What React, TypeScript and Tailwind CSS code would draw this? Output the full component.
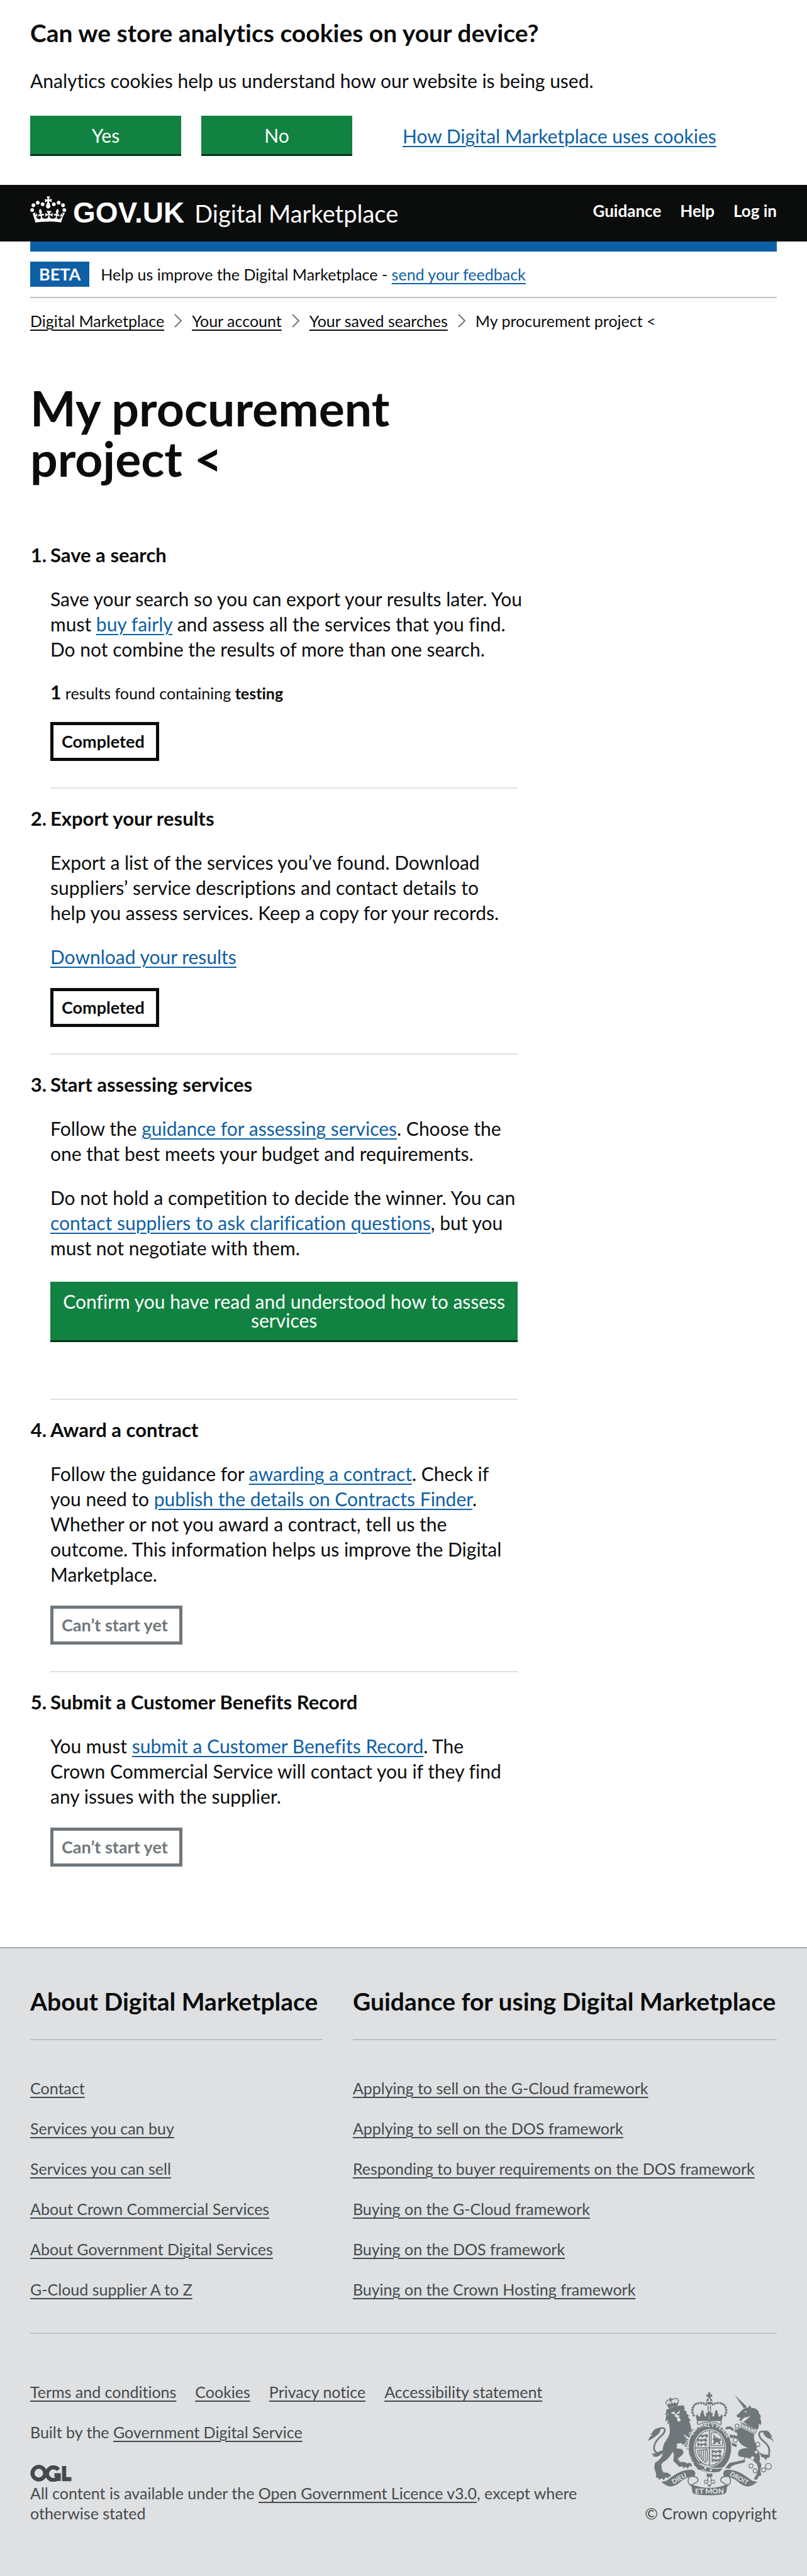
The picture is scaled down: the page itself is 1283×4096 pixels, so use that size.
import type { ReactNode } from "react";

const linkClass =
  "text-[#0e60a5] underline decoration-2 underline-offset-4 hover:text-[#2b8cc4]";
const footerLinkClass = "underline decoration-2 underline-offset-4";

function A({ children }: { children: ReactNode }) {
  return (
    <a href="#" className={linkClass}>
      {children}
    </a>
  );
}

function CrownLogo() {
  return (
    <svg viewBox="0 4 36 26.2" className="h-[42px] w-[58px] shrink-0" fill="currentColor" aria-hidden="true">
      <path d="M6.7 12.2c1 .4 2.1-.1 2.5-1s-.1-2.1-1-2.5c-1-.4-2.1.1-2.5 1-.4 1 0 2.1 1 2.5m-4.3 2.5c1 .4 2.1-.1 2.5-1s-.1-2.1-1-2.5c-1-.4-2.1.1-2.5 1-.5 1 0 2.1 1 2.5m-1.3 4.8c1 .4 2.1-.1 2.5-1 .4-1-.1-2.1-1-2.5-1-.4-2.1.1-2.5 1-.4 1 0 2.1 1 2.5m10.4-5.8c1 .4 2.1-.1 2.5-1s-.1-2.1-1-2.5c-1-.4-2.1.1-2.5 1s0 2.1 1 2.5m17.4-1.5c-1 .4-2.1-.1-2.5-1s.1-2.1 1-2.5c1-.4 2.1.1 2.5 1 .5 1 0 2.1-1 2.5m4.3 2.5c-1 .4-2.1-.1-2.5-1s.1-2.1 1-2.5c1-.4 2.1.1 2.5 1 .5 1 0 2.1-1 2.5m1.3 4.8c-1 .4-2.1-.1-2.5-1-.4-1 .1-2.1 1-2.5 1-.4 2.1.1 2.5 1 .4 1 0 2.1-1 2.5m-10.4-5.8c-1 .4-2.1-.1-2.5-1s.1-2.1 1-2.5c1-.4 2.1.1 2.5 1s0 2.1-1 2.5m-5.3-4.9 2.4 1.3V6.5l-2.4.8c-.1-.1-.1-.2-.2-.2s1-3 1-3h-3.4l1 3c-.1.1-.2.1-.2.2-.1.1-2.4-.7-2.4-.7v3.5L17 8.8c-.1.1 0 .2.1.3l-1.4 4.2c-.1.2-.1.4-.1.7 0 1.1.8 2.1 1.9 2.2h.6C19.2 16 20 15.1 20 14c0-.2 0-.4-.1-.7l-1.4-4.2c.2-.1.3-.2.3-.3m-1 20.3c4.6 0 8.9.3 12.8.9 1.1-4.6 2.4-7.2 3.8-9.1l-2.6-.9c.3 1.3.3 1.9 0 2.8-.4-.4-.8-1.2-1.1-2.4l-1.2 4.2c.8-.5 1.4-.9 2-.9-1.2 2.6-2.7 3.2-3.6 3-1.2-.2-1.7-1.3-1.5-2.2.3-1.3 1.6-1.6 2.2-.1 1.1-2.4-.8-3.1-2-2.3 1.9-1.9 2.1-3.6.6-5.6-2.1 1.6-2.2 3.3-1.2 5.5-1.2-1.5-3.3-.7-2.5 1.6 1-1.4 2.1-.5 1.9.8-.2 1.1-1.7 2.1-3.5 1.9-2.7-.2-2.9-2.1-2.9-3.6.7-.1 1.9.5 2.9 1.9l.4-4.3c-1.1 1.1-2.1 1.4-3.2 1.4.4-1.2 2.1-3.1 2.1-3.1h-5.4s1.7 1.9 2.1 3.1c-1.1 0-2.1-.3-3.2-1.4l.4 4.3c1-1.4 2.2-2 2.9-1.9-.1 1.5-.2 3.4-2.9 3.6-1.9.2-3.4-.8-3.5-1.9-.2-1.3 1-2.2 1.9-.8.7-2.3-1.3-3-2.6-1.6 1-2.2.9-3.9-1.2-5.5-1.5 2-1.3 3.7.6 5.6-1.2-.8-3.1-.1-2 2.3.6-1.5 1.9-1.1 2.2.1.2.9-.3 1.9-1.5 2.2-.9.2-2.4-.5-3.6-3 .6 0 1.2.3 2 .9l-1.2-4.2c-.3 1.2-.7 2-1.1 2.4-.3-.9-.2-1.5 0-2.8l-2.6.9C2.7 23 4 25.5 5.1 30.1c3.9-.6 8.2-.9 12.7-.9" />
    </svg>
  );
}

function OglLogo() {
  return (
    <svg viewBox="0 0 246 102" className="h-[27px] w-[66px]" role="img" aria-label="Open Government Licence">
      <g fill="none" stroke="#454a4c" strokeWidth="24">
        <circle cx="50" cy="51" r="38" />
        <path d="M168 31A38 38 0 1 0 173 68M144 63H170V98" />
        <path d="M202 8V87H246" strokeWidth="25" />
      </g>
    </svg>
  );
}

const arch: [number, number][] = [
  [343, 207], [337, 192], [336, 176], [339, 161], [346, 148], [357, 139], [371, 134], [387, 133], [403, 136], [417, 142],
];

function ScrollEnd() {
  return (
    <g>
      <path d="M150 604L176 600C215 578 255 532 328 532C350 534 362 548 346 576C306 572 280 592 258 610C236 628 216 634 200 632Q178 628 150 604Z" />
      <path d="M318 574C304 600 310 620 332 628M344 574C368 572 376 596 362 606C352 613 342 612 338 624" fill="none" stroke="#6f777b" strokeWidth="6" />
      <path d="M324 616Q372 640 438 641V684C380 684 342 680 336 668Q334 640 324 616Z" />
    </g>
  );
}

function CrownHalf() {
  return (
    <g>
      {arch.map(([x, y]) => (
        <circle key={`${x}-${y}`} cx={x} cy={y} r="7" />
      ))}
      <path d="M352 202L358 212L364 200L372 214L380 216L384 204Q378 200 388 196Q384 186 396 174Q407 186 402 196Q412 200 406 208L412 216L424 208L420 196L436 204V240H362Q362 222 352 202Z" />
      <path d="M370 238H438V248Q400 247 372 264Q360 256 370 238Z" fill="none" stroke="#6f777b" strokeWidth="6" />
    </g>
  );
}

function Passant({ x, y }: { x: number; y: number }) {
  return (
    <path
      transform={`translate(${x} ${y})`}
      d="M0 4L8 0L14 6H44L50 0L58 4L64 14H56L60 22H50L46 15H34L30 22H20L24 15H14L10 22H0L6 14Z"
    />
  );
}

function RoyalCrest() {
  return (
    <svg viewBox="70 70 755 616" className="h-[164px] w-[201px]" fill="#6f777b" role="img" aria-label="Royal coat of arms">
      <defs>
        <path id="garter" d="M349 489A103 122 0 0 1 440 279A103 122 0 0 1 515 495" />
        <clipPath id="shield">
          <ellipse cx="440" cy="402" rx="87" ry="102" />
        </clipPath>
      </defs>

      <path d="M420 80L432 84L428 71H446L442 84L454 80V98L442 94L446 106H428L432 94L420 98Z" />
      <path d="M418 122Q420 108 433 106V122ZM441 106Q454 108 456 122H441ZM416 127H458Q452 142 438 143Q422 142 416 127ZM427 150H433V180H427ZM441 150H447V180H441ZM424 184H450L444 194L456 190V212L438 206L418 212V190L430 194Z" />
      <CrownHalf />
      <g transform="translate(874 0) scale(-1 1)">
        <CrownHalf />
      </g>

      <path d="M178 176Q230 146 284 148L290 166L286 176L305 186L297 192L318 212L308 216L328 240L316 242L324 262L330 292L345 288L330 312Q346 345 350 375L346 400L352 424L336 420L332 434L322 422L310 426L312 410L300 412L302 396L288 392L292 376L276 384L270 372L238 378Q250 386 240 404L272 408Q292 428 276 444L248 466L262 486L290 486L304 494L322 490L334 502L330 516L320 508L308 526L298 514L284 524L276 512L256 514L240 496L222 480L226 440L218 424Q200 464 158 490L150 502L154 530L162 548L186 550L206 562L208 576L196 570L192 584L178 576L164 594L152 582L138 592L130 580L118 578L120 558L108 522L112 492Q152 466 158 438Q152 395 182 352Q206 320 200 284L196 252L186 262L190 232L174 246L180 206L172 198L182 190Z" />
      <path d="M196 166L178 138L190 144L196 132L204 142L212 128L222 138L232 126L238 138L252 128L248 150Q218 154 196 166Z" />
      <g fill="none" stroke="#6f777b">
        <path d="M179 138Q176 116 200 116L207 124L214 113Q244 98 252 118L250 132" strokeWidth="8" strokeDasharray="7 3" />
        <path d="M206 100V122M196 111H217" strokeWidth="6" />
        <path d="M140 436C84 424 106 366 150 330C174 308 180 284 158 283Q144 280 132 292" strokeWidth="10" />
        <path d="M792 440C806 396 776 376 754 356C730 334 728 306 748 304Q758 302 768 310" strokeWidth="10" />
      </g>
      <path d="M72 360Q78 332 100 324L82 322Q96 316 100 304Q112 282 148 280Q146 300 138 312Q124 332 72 360ZM88 434Q120 438 142 420L168 416Q158 444 120 456L96 450L106 443Z" />
      <path d="M822 374Q814 348 788 344Q756 328 760 300Q788 292 800 316Q806 330 816 334L802 336Q820 352 822 374ZM734 424Q752 448 804 440L794 454L804 456L782 462L774 476L764 460L748 456Z" />
      <g fill="#dee0e2">
        <path d="M208 190L232 184L228 194L240 198L262 176L258 196L238 204L262 210L252 218Q270 226 264 240Q258 250 248 242Q240 232 246 222L226 210L236 202L214 198Z" />
        <path d="M182 204L196 196L192 204Z" />
        <path d="M284 318L348 372L342 380L288 332Z" opacity="0.9" />
      </g>
      <path d="M306 336L350 376L346 388Z" />

      <path d="M588 86L662 156L644 166Z" />
      <path d="M600 206Q616 196 632 176Q650 160 672 160L676 144L688 162Q720 162 734 188L730 190Q744 204 746 220L738 220Q750 240 746 264Q736 262 732 254Q736 292 720 290L706 284L668 266L640 244Q668 232 684 206Q664 222 650 218Q634 228 626 244L614 234L628 222L608 220L602 216Z" />
      <path d="M646 183L664 184L652 192Z" fill="#dee0e2" />
      <path d="M628 250L722 292L710 316L626 272Z" fill="none" stroke="#6f777b" strokeWidth="4" />
      <path d="M636 270L642 256L652 274L664 264L668 284L682 274L686 292L700 282L704 304" fill="none" stroke="#6f777b" strokeWidth="5" />
      <path d="M624 278L706 320Q696 350 722 392Q714 410 732 420Q744 460 736 484L748 498L742 540L748 566L730 572L722 592L702 588L718 562L730 532L722 500L696 474Q668 456 648 462L650 488L590 502L566 514L560 526L532 522L558 492L642 474L646 458L612 452Q602 420 624 410Q646 400 674 404Q616 386 606 346L580 340L556 346L578 374L600 380V398L574 388L548 358L544 334L560 322L606 330L602 312L574 300L560 288L540 292L530 286L544 274H566L582 288L606 292Z" />
      <g fill="none" stroke="#6f777b" strokeWidth="5">
        <circle cx="603" cy="271" r="12" />
        <circle cx="592" cy="356" r="13" />
        <circle cx="726" cy="381" r="13" />
        <circle cx="686" cy="510" r="12" />
        <circle cx="711" cy="539" r="12" />
        <circle cx="761" cy="533" r="12" />
        <circle cx="790" cy="512" r="18" />
      </g>
      <g fill="#dee0e2">
        <circle cx="717" cy="427" r="9" />
        <circle cx="695" cy="462" r="10" />
        <circle cx="585" cy="298" r="6" />
      </g>

      <ellipse cx="440" cy="402" rx="134" ry="154" fill="#dee0e2" />
      <ellipse cx="440" cy="402" rx="128" ry="148" />
      <ellipse cx="440" cy="402" rx="96" ry="112" fill="#dee0e2" />
      <ellipse cx="440" cy="402" rx="89" ry="104" fill="none" stroke="#6f777b" strokeWidth="5" />
      <path d="M438 300V505M350 402H530" stroke="#6f777b" strokeWidth="6" />
      <g clipPath="url(#shield)">
        <Passant x={368} y={318} />
        <Passant x={362} y={344} />
        <Passant x={362} y={370} />
        <Passant x={448} y={412} />
        <Passant x={448} y={438} />
        <Passant x={448} y={464} />
        <path d="M448 312H516V388H448Z" fill="none" stroke="#6f777b" strokeWidth="5" />
        <path d="M460 322L474 330L470 342L484 338L494 350L504 342L508 356L498 364L506 380H492L484 364L470 380H456L466 362L456 350L464 340Z" />
        <path d="M364 416L424 412Q430 440 424 484M364 416Q370 460 418 490M378 418L384 454M390 416L394 466M402 416L404 474M414 416L416 484" fill="none" stroke="#6f777b" strokeWidth="5" />
      </g>
      <text fill="#dee0e2" fontFamily="Lato, sans-serif" fontWeight="900" fontSize="31">
        <textPath href="#garter">HONI SOIT QUI MAL Y PENSE</textPath>
      </text>
      <path d="M366 492Q440 534 524 520L500 546Q440 560 384 528L366 530Z" stroke="#dee0e2" strokeWidth="5" />
      <path d="M392 490Q366 482 366 508Q362 532 390 528" fill="none" stroke="#6f777b" strokeWidth="8" />
      <circle cx="412" cy="522" r="7" fill="#dee0e2" />
      <circle cx="446" cy="534" r="7" fill="#dee0e2" />

      <path d="M421 554Q437 560 455 554V574H421Z" />
      <path d="M438 568Q456 590 444 606Q452 592 464 594Q474 606 464 614L452 610L446 622L438 632L430 622L424 610L412 614Q402 606 412 594Q424 592 432 606Q420 590 438 568Z" fill="#dee0e2" stroke="#6f777b" strokeWidth="5" />
      <circle cx="438" cy="627" r="6" />

      <ScrollEnd />
      <g transform="translate(874 0) scale(-1 1)">
        <ScrollEnd />
      </g>
      <g fill="#dee0e2" fontFamily="Lato, sans-serif" fontWeight="900" textAnchor="middle">
        <text x="264" y="596" fontSize="40" transform="rotate(-30 264 596)">DIEU</text>
        <text x="608" y="594" fontSize="38" transform="rotate(29 608 594)">DROIT</text>
        <text x="438" y="676" fontSize="44">ET MON</text>
      </g>
    </svg>
  );
}

function GreenButton({ children, className }: { children: ReactNode; className: string }) {
  return (
    <button
      type="button"
      className={`border-b-[3px] border-[#003518] bg-[#118241] text-center text-3xl leading-[30px] text-white ${className}`}
    >
      {children}
    </button>
  );
}

function Tag({ muted, children }: { muted?: boolean; children: ReactNode }) {
  return (
    <strong
      className={`block w-fit border-[5px] py-[11px] pr-[18px] pl-[13px] text-[27px] leading-[30px] font-bold ${
        muted ? "border-[#6f777b] text-[#6f777b]" : "border-[#0b0c0c]"
      }`}
    >
      {children}
    </strong>
  );
}

function Step({ number, title, children }: { number: number; title: string; children: ReactNode }) {
  return (
    <li className="group flex [&+li]:mt-[27px]">
      <span className="w-8 shrink-0 pr-1.5 text-right text-[31px] leading-10 font-bold" aria-hidden="true">
        {number}.
      </span>
      <div className="min-w-0 grow border-b-2 border-[#dee0e2] pb-[42px] group-last:border-b-0 group-last:pb-0">
        <h2 className="mb-[30px] text-[31px] leading-10 font-bold">{title}</h2>
        {children}
      </div>
    </li>
  );
}

function P({ children }: { children: ReactNode }) {
  return <p className="-mr-3 mb-[30px] text-3xl leading-10">{children}</p>;
}

const crumbs = ["Digital Marketplace", "Your account", "Your saved searches"];

const footerColumns = [
  {
    title: "About Digital Marketplace",
    links: [
      "Contact",
      "Services you can buy",
      "Services you can sell",
      "About Crown Commercial Services",
      "About Government Digital Services",
      "G-Cloud supplier A to Z",
    ],
  },
  {
    title: "Guidance for using Digital Marketplace",
    links: [
      "Applying to sell on the G-Cloud framework",
      "Applying to sell on the DOS framework",
      "Responding to buyer requirements on the DOS framework",
      "Buying on the G-Cloud framework",
      "Buying on the DOS framework",
      "Buying on the Crown Hosting framework",
    ],
  },
];

export default function App() {
  return (
    <div className="bg-white font-[Lato,sans-serif] text-[#0b0c0c] [font-variant-ligatures:none]">
      <section aria-label="Cookies" className="px-12 pt-8 pb-[46px]">
        <h2 className="text-[39px] leading-10 font-bold">Can we store analytics cookies on your device?</h2>
        <p className="mt-9 text-3xl leading-10">
          Analytics cookies help us understand how our website is being used.
        </p>
        <div className="mt-9 flex items-center">
          <GreenButton className="h-16 w-60">Yes</GreenButton>
          <GreenButton className="ml-8 h-16 w-60">No</GreenButton>
          <a href="#" className={`ml-20 text-3xl leading-10 ${linkClass}`}>
            How Digital Marketplace uses cookies
          </a>
        </div>
      </section>

      <header className="bg-[#0b0c0c] px-12 text-white">
        <div className="flex h-[90px] items-start justify-between">
          <div className="flex items-start pt-[18px]">
            <CrownLogo />
            <div className="flex items-baseline pt-1.5">
              <a href="#" className="ml-2.5 font-['Liberation_Sans',sans-serif] text-[46px] leading-10 font-bold">
                GOV.UK
              </a>
              <a href="#" className="ml-4 text-[38px] leading-10">
                Digital Marketplace
              </a>
            </div>
          </div>
          <nav className="flex gap-[30px] pt-[26px] text-[26px] leading-[30px] font-bold">
            <a href="#">Guidance</a>
            <a href="#">Help</a>
            <a href="#">Log in</a>
          </nav>
        </div>
      </header>

      <div className="px-12">
        <div className="h-4 bg-[#0e60a5]" />
        <div className="flex items-center gap-[18px] border-b-2 border-[#bfc1c3] py-4 text-[25px] leading-10">
          <strong className="bg-[#0e60a5] px-3.5 text-[27px] font-bold text-white">BETA</strong>
          <p>
            Help us improve the Digital Marketplace - <A>send your feedback</A>
          </p>
        </div>

        <nav aria-label="Breadcrumb" className="mt-4">
          <ol className="flex text-[25px] leading-10">
            {crumbs.map((crumb) => (
              <li key={crumb} className="flex items-center">
                <a href="#" className={footerLinkClass}>
                  {crumb}
                </a>
                <svg viewBox="0 0 12 22" className="mx-4 h-[22px] w-3" fill="none" stroke="#6f777b" strokeWidth="2" aria-hidden="true">
                  <path d="M1 1L11 11L1 21" />
                </svg>
              </li>
            ))}
            <li>My procurement project &lt;</li>
          </ol>
        </nav>

        <main className="w-2/3 pt-[78px] pr-4 pb-32">
          <h1 className="text-[77px] leading-20 font-bold">
            My procurement
            <br />
            project &lt;
          </h1>
          <ol className="mt-[94px]">
            <Step number={1} title="Save a search">
              <P>
                Save your search so you can export your results later. You must <A>buy fairly</A> and assess all the
                services that you find.
                <br />
                Do not combine the results of more than one search.
              </P>
              <p className="mb-[26px] text-[25px] leading-10">
                <strong className="text-3xl leading-8 font-bold">1</strong> results found containing{" "}
                <strong className="font-bold">testing</strong>
              </p>
              <Tag>Completed</Tag>
            </Step>
            <Step number={2} title="Export your results">
              <P>
                Export a list of the services you’ve found. Download suppliers’ service descriptions and contact
                details to
                <br />
                help you assess services. Keep a copy for your records.
              </P>
              <P>
                <A>Download your results</A>
              </P>
              <Tag>Completed</Tag>
            </Step>
            <Step number={3} title="Start assessing services">
              <P>
                Follow the <A>guidance for assessing services</A>. Choose the
                <br />
                one that best meets your budget and requirements.
              </P>
              <P>
                Do not hold a competition to decide the winner. You can{" "}
                <A>contact suppliers to ask clarification questions</A>, but you
                <br />
                must not negotiate with them.
              </P>
              <GreenButton className="mt-1 mb-12 w-full px-4 pt-4 pb-[17px]">
                Confirm you have read and understood how to assess services
              </GreenButton>
            </Step>
            <Step number={4} title="Award a contract">
              <P>
                Follow the guidance for <A>awarding a contract</A>. Check if
                <br />
                you need to <A>publish the details on Contracts Finder</A>.
                <br />
                Whether or not you award a contract, tell us the
                <br />
                outcome. This information helps us improve the Digital Marketplace.
              </P>
              <Tag muted>Can’t start yet</Tag>
            </Step>
            <Step number={5} title="Submit a Customer Benefits Record">
              <P>
                You must <A>submit a Customer Benefits Record</A>. The
                <br />
                Crown Commercial Service will contact you if they find
                <br />
                any issues with the supplier.
              </P>
              <Tag muted>Can’t start yet</Tag>
            </Step>
          </ol>
        </main>
      </div>

      <footer className="border-t-2 border-[#a1acb2] bg-[#dee0e2] px-12 pt-16 pb-[84px] text-[25px] leading-8 text-[#454a4c]">
        <div className="grid grid-cols-[40fr_58fr] gap-12">
          {footerColumns.map((column) => (
            <div key={column.title} className="min-w-0">
              <h2 className="border-b-2 border-[#bfc1c3] pb-10 text-[39px] leading-10 font-bold whitespace-nowrap text-[#0b0c0c]">
                {column.title}
              </h2>
              <ul className="mt-[60px] flex flex-col gap-8">
                {column.links.map((link) => (
                  <li key={link}>
                    <a href="#" className={footerLinkClass}>
                      {link}
                    </a>
                  </li>
                ))}
              </ul>
            </div>
          ))}
        </div>
        <div className="mt-[53px] flex items-end justify-between border-t-2 border-[#bfc1c3] pt-[76px]">
          <div className="max-w-[900px]">
            <ul className="flex gap-[30px]">
              {["Terms and conditions", "Cookies", "Privacy notice", "Accessibility statement"].map((link) => (
                <li key={link}>
                  <a href="#" className={footerLinkClass}>
                    {link}
                  </a>
                </li>
              ))}
            </ul>
            <p className="mt-8">
              Built by the{" "}
              <a href="#" className={footerLinkClass}>
                Government Digital Service
              </a>
            </p>
            <div className="mt-9 mb-0.5">
              <OglLogo />
            </div>
            <p>
              All content is available under the{" "}
              <a href="#" className={footerLinkClass}>
                Open Government Licence v3.0
              </a>
              , except where otherwise stated
            </p>
          </div>
          <a href="#" className="flex shrink-0 flex-col items-center gap-3">
            <RoyalCrest />
            <span>© Crown copyright</span>
          </a>
        </div>
      </footer>
    </div>
  );
}
